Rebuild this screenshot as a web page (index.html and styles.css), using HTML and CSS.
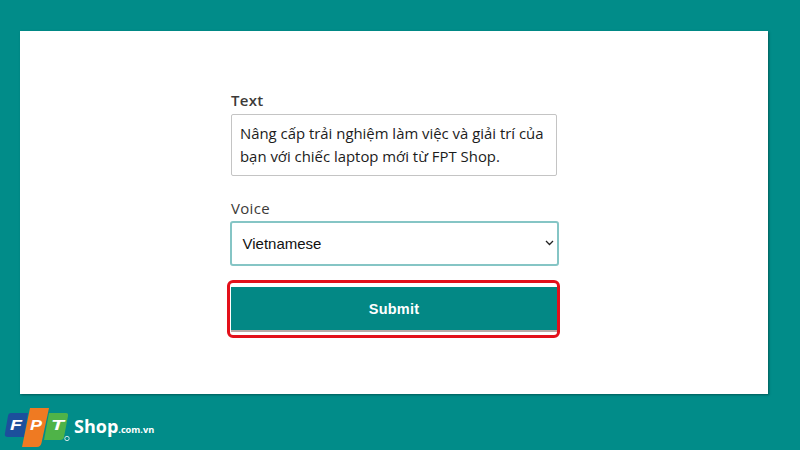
FILE: index.html
```html
<!DOCTYPE html>
<html lang="vi">
<head>
<meta charset="utf-8">
<title>Text to speech</title>
<link rel="stylesheet" href="styles.css">
</head>
<body>
<main class="card">
  <form class="form">
    <div class="label text-label">Text</div>
    <div class="textbox">Nâng cấp trải nghiệm làm việc và giải trí của bạn với chiếc laptop mới từ FPT Shop.</div>
    <div class="label voice-label">Voice</div>
    <div class="select">
      <span>Vietnamese</span>
      <svg class="chevron" width="9" height="6" viewBox="0 0 9 6"><path d="M1 1l3.500 3.500L8 1" fill="none" stroke="#222" stroke-width="1.300"/></svg>
    </div>
    <div class="highlight"><div class="submit">Submit</div></div>
  </form>
</main>
<footer class="brand">
  <svg class="logo" width="72" height="45" viewBox="0 0 72 45">
    <path d="M11 8H28L24 32H8Q4 32 5 28L8 11Q8.500 8 11 8Z" fill="#1c4f9c"/>
    <path d="M49 8H66Q68.500 8 68 11L64 32Q63.500 35 60 35H44Z" fill="#4fb348"/>
    <path d="M30 3H49L41.500 38Q40.500 42 37 42H22Z" fill="#ef7a22"/>
    <text x="10" y="25" class="logo-letter" textLength="12" lengthAdjust="spacingAndGlyphs">F</text>
    <text x="30" y="25" class="logo-letter" textLength="12" lengthAdjust="spacingAndGlyphs">P</text>
    <text x="51" y="25" class="logo-letter" textLength="13" lengthAdjust="spacingAndGlyphs">T</text>
    <circle cx="67" cy="33.500" r="2.200" fill="none" stroke="#cfe8e6" stroke-width="1"/>
  </svg>
  <div class="brand-name"><span class="shop">Shop</span><span class="domain">.com.vn</span></div>
</footer>
</body>
</html>
```

FILE: styles.css
```css
* { box-sizing: border-box; }
html, body { margin: 0; padding: 0; }
body {
  width: 800px;
  height: 450px;
  overflow: hidden;
  background: #018c89;
  padding-top: 31px;
}
.card {
  margin-left: 20px;
  width: 748px;
  height: 363px;
  background: #fff;
  box-shadow: 1px 1px 2px rgba(0, 50, 50, .55);
  display: flex;
  justify-content: center;
  padding-top: 60px;
}
.form {
  width: 326px;
  display: flex;
  flex-direction: column;
  font-family: "Open Sans", "Noto Sans", sans-serif;
}
.label {
  font-size: 15px;
  line-height: 18px;
  font-weight: 500;
  color: #3c3a38;
  letter-spacing: .3px;
}
.text-label { height: 23px; font-weight: 600; }
.voice-label { margin-top: 23px; height: 22px; }
.textbox {
  height: 62px;
  border: 1px solid #c4c4c4;
  border-radius: 2px;
  padding: 7px 8px;
  font-size: 14.900px;
  line-height: 22.500px;
  color: #1c1c1c;
}
.select {
  width: 329px;
  height: 45px;
  margin-left: -1.500px;
  border: 2px solid #85c5c5;
  border-radius: 3px;
  display: flex;
  align-items: center;
  justify-content: space-between;
  padding: 0 3px 1px 11px;
  font-family: "Liberation Sans", Arial, sans-serif;
  font-size: 15px;
  color: #111;
}
.highlight {
  width: 333px;
  height: 58px;
  margin: 14px 0 0 -4px;
  border: 3px solid #e3101a;
  border-radius: 6px;
  padding: 4px 0 3px 1px;
}
.submit {
  width: 326px;
  height: 45px;
  background: #038885;
  border-bottom: 2px solid #b9a9a6;
  display: flex;
  align-items: center;
  justify-content: center;
  color: #fff;
  font-family: "Liberation Sans", Arial, sans-serif;
  font-weight: 700;
  font-size: 14.500px;
  letter-spacing: .2px;
}
.brand {
  margin-top: 11px;
  display: flex;
  align-items: center;
  gap: 2px;
}
.logo { display: block; flex: none; }
.logo-letter {
  font-family: "Liberation Sans", Arial, sans-serif;
  font-weight: 700;
  font-style: italic;
  font-size: 14px;
  fill: #fff;
}
.brand-name {
  color: #fff;
  font-family: "Open Sans", "Noto Sans", sans-serif;
  font-weight: 700;
  white-space: nowrap;
  margin-bottom: 4px;
}
.shop { font-size: 18px; }
.domain { font-size: 9.200px; }
```
